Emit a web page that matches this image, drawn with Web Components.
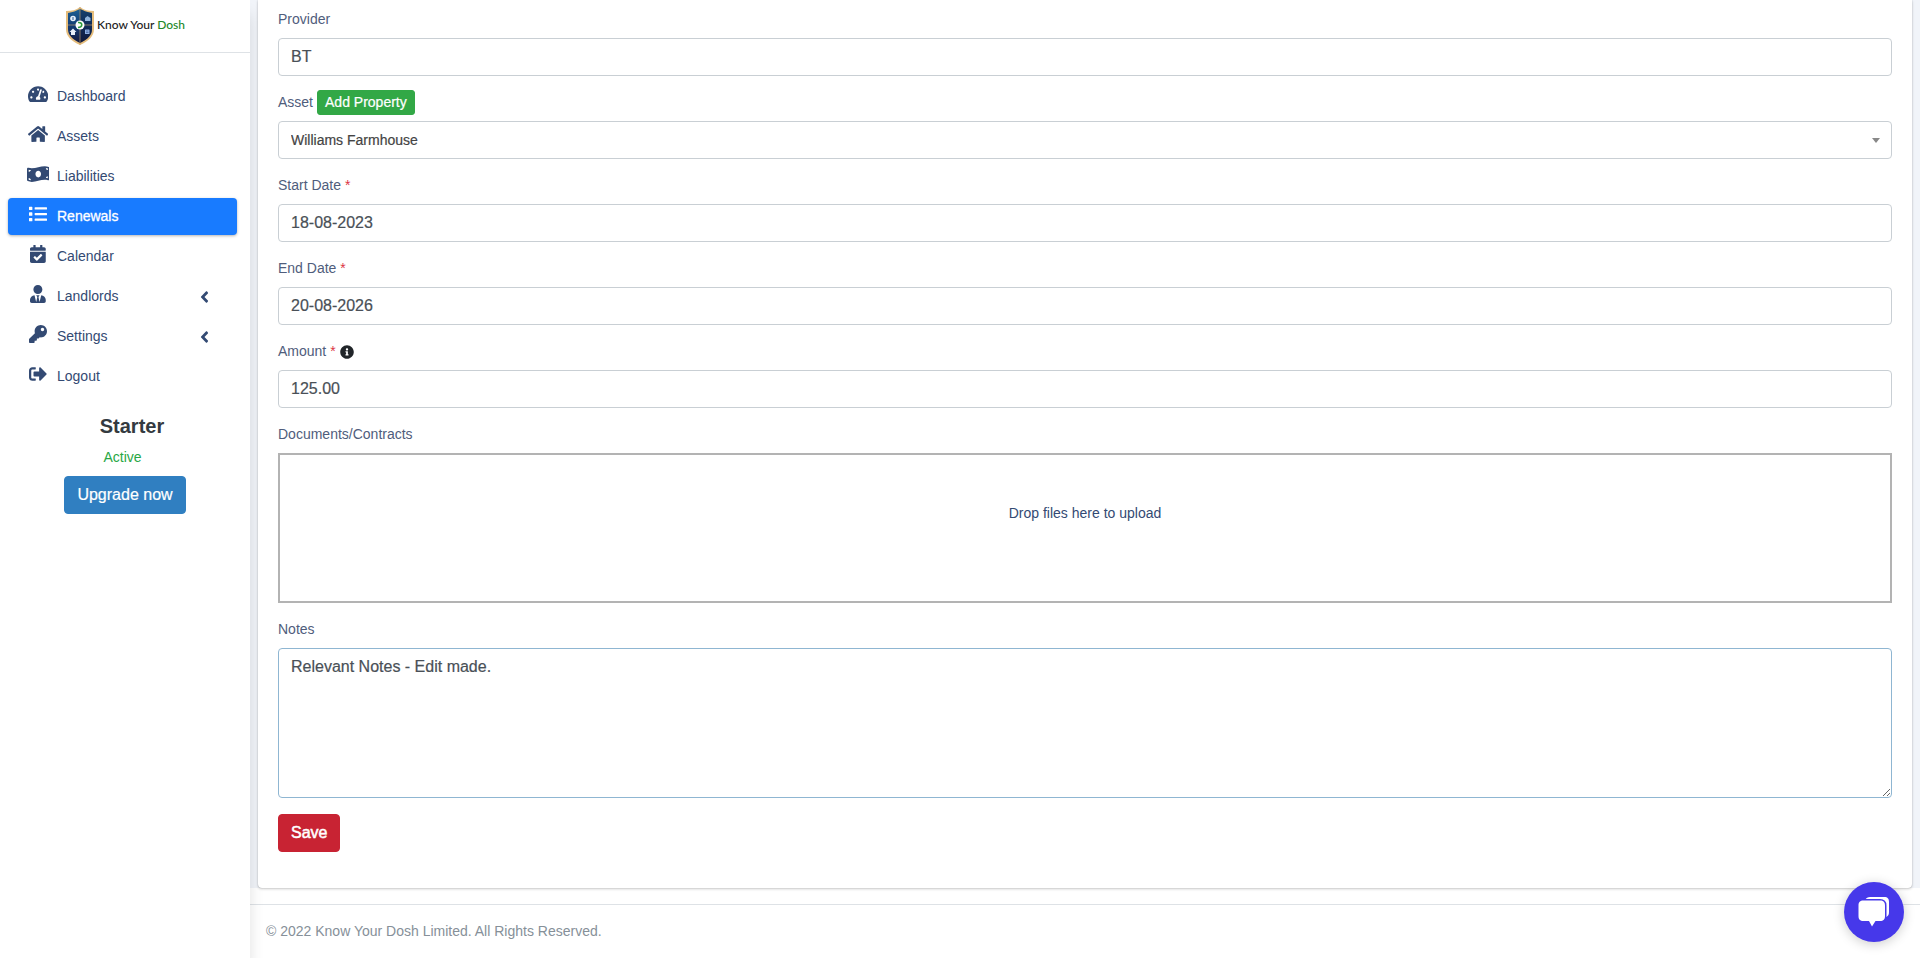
<!DOCTYPE html>
<html lang="en">
<head>
<meta charset="utf-8">
<meta name="viewport" content="width=device-width, initial-scale=1">
<title>Know Your Dosh - Renewals</title>
<style>
  body {
    margin: 0;
    background: #fff;
    color: #212529;
    font: 400 14px/21px "Liberation Sans", Arial, sans-serif;
  }
</style>
</head>
<body>
<app-shell>
  <app-sidebar slot="sidebar">
    <brand-logo slot="brand"></brand-logo>
    <nav-item icon="dashboard">Dashboard</nav-item>
    <nav-item icon="home">Assets</nav-item>
    <nav-item icon="money">Liabilities</nav-item>
    <nav-item icon="list" active>Renewals</nav-item>
    <nav-item icon="calendar">Calendar</nav-item>
    <nav-item icon="user" expandable>Landlords</nav-item>
    <nav-item icon="key" expandable>Settings</nav-item>
    <nav-item icon="logout">Logout</nav-item>
    <plan-status slot="plan" plan="Starter" status="Active"></plan-status>
  </app-sidebar>

  <form-card>
    <form-field label="Provider" value="BT"></form-field>
    <form-field label="Asset" type="select" value="Williams Farmhouse">
      <app-button slot="action" variant="success" size="small">Add Property</app-button>
    </form-field>
    <form-field label="Start Date" value="18-08-2023" required></form-field>
    <form-field label="End Date" value="20-08-2026" required></form-field>
    <form-field label="Amount" value="125.00" required>
      <app-icon slot="action" name="info"></app-icon>
    </form-field>
    <drop-zone label="Documents/Contracts">Drop files here to upload</drop-zone>
    <form-field label="Notes" type="textarea" value="Relevant Notes - Edit made."></form-field>
    <app-button variant="danger">Save</app-button>
  </form-card>

  <span slot="footer">© 2022 Know Your Dosh Limited. All Rights Reserved.</span>
  <chat-launcher slot="chat"></chat-launcher>
</app-shell>

<script>
const ICONS = {
  dashboard: [576, 'M288 32C128.940 32 0 160.940 0 320c0 52.800 14.250 102.260 39.060 144.800 5.610 9.620 16.300 15.200 27.440 15.200h443c11.140 0 21.830-5.580 27.440-15.200C561.750 422.260 576 372.800 576 320c0-159.060-128.940-288-288-288zm0 64c14.710 0 26.580 10.130 30.320 23.650-1.110 2.260-2.640 4.230-3.450 6.670l-9.220 27.670c-5.130 3.490-10.970 6.010-17.640 6.010-17.670 0-32-14.330-32-32S270.330 96 288 96zM96 384c-17.670 0-32-14.330-32-32s14.330-32 32-32 32 14.330 32 32-14.330 32-32 32zm48-160c-17.670 0-32-14.330-32-32s14.330-32 32-32 32 14.330 32 32-14.330 32-32 32zm246.770-72.410l-61.330 184C343.130 347.330 352 364.540 352 384c0 11.720-3.380 22.550-8.880 32H232.880c-5.500-9.450-8.880-20.280-8.880-32 0-33.940 26.500-61.430 59.900-63.590l61.340-184.010c4.170-12.560 17.730-19.450 30.360-15.170 12.570 4.190 19.350 17.790 15.170 30.360zm14.660 57.200l15.520-46.550c3.470-1.290 7.130-2.230 11.050-2.230 17.670 0 32 14.330 32 32s-14.330 32-32 32c-11.380-.010-20.890-6.280-26.570-15.220zM480 384c-17.670 0-32-14.330-32-32s14.330-32 32-32 32 14.330 32 32-14.330 32-32 32z'],
  home: [576, 'M280.370 148.260L96 300.110V464a16 16 0 0 0 16 16l112.060-.290a16 16 0 0 0 15.920-16V368a16 16 0 0 1 16-16h64a16 16 0 0 1 16 16v95.640a16 16 0 0 0 16 16.050L464 480a16 16 0 0 0 16-16V300L295.670 148.260a12.190 12.190 0 0 0-15.300 0zM571.600 251.470L488 182.560V44.050a12 12 0 0 0-12-12h-56a12 12 0 0 0-12 12v72.610L318.470 43a48 48 0 0 0-61 0L4.340 251.470a12 12 0 0 0-1.600 16.900l25.500 31A12 12 0 0 0 45.150 301l235.220-193.740a12.190 12.190 0 0 1 15.300 0L530.900 301a12 12 0 0 0 16.900-1.600l25.500-31a12 12 0 0 0-1.700-16.930z'],
  money: [640, 'M621.160 54.460C582.370 38.190 543.550 32 504.750 32c-123.170-.010-246.330 62.340-369.500 62.340-30.890 0-61.760-3.920-92.650-13.720-3.470-1.100-6.950-1.620-10.350-1.620C15.040 79 0 92.320 0 110.810v317.260c0 12.630 7.230 24.600 18.840 29.460C57.630 473.810 96.450 480 135.250 480c123.170 0 246.340-62.350 369.510-62.350 30.890 0 61.760 3.920 92.650 13.720 3.470 1.100 6.950 1.620 10.350 1.620 17.210 0 32.250-13.320 32.250-31.810V83.930c-.010-12.640-7.240-24.600-18.850-29.470zM48 132.220c20.120 5.040 41.120 7.570 62.720 8.930C104.840 170.540 79 192.690 48 192.690v-60.470zm0 285v-47.780c34.370 0 62.180 27.270 63.710 61.400-22.530-1.810-43.590-6.310-63.710-13.620zM320 352c-44.190 0-80-42.990-80-96 0-53.020 35.820-96 80-96s80 42.980 80 96c0 53.030-35.830 96-80 96zm272 27.780c-17.520-4.390-35.710-6.850-54.320-8.440 5.870-26.080 27.500-45.880 54.320-49.280v57.720zm0-236.110c-30.890-3.910-54.860-29.700-55.810-61.550 19.540 2.170 38.090 6.230 55.810 12.660v48.890z'],
  list: [512, 'M80 368H16a16 16 0 0 0-16 16v64a16 16 0 0 0 16 16h64a16 16 0 0 0 16-16v-64a16 16 0 0 0-16-16zm0-320H16A16 16 0 0 0 0 64v64a16 16 0 0 0 16 16h64a16 16 0 0 0 16-16V64a16 16 0 0 0-16-16zm0 160H16a16 16 0 0 0-16 16v64a16 16 0 0 0 16 16h64a16 16 0 0 0 16-16v-64a16 16 0 0 0-16-16zm416 176H176a16 16 0 0 0-16 16v32a16 16 0 0 0 16 16h320a16 16 0 0 0 16-16v-32a16 16 0 0 0-16-16zm0-320H176a16 16 0 0 0-16 16v32a16 16 0 0 0 16 16h320a16 16 0 0 0 16-16V80a16 16 0 0 0-16-16zm0 160H176a16 16 0 0 0-16 16v32a16 16 0 0 0 16 16h320a16 16 0 0 0 16-16v-32a16 16 0 0 0-16-16z'],
  calendar: [448, 'M436 160H12c-6.627 0-12-5.373-12-12v-36c0-26.510 21.490-48 48-48h48V12c0-6.627 5.373-12 12-12h40c6.627 0 12 5.373 12 12v52h128V12c0-6.627 5.373-12 12-12h40c6.627 0 12 5.373 12 12v52h48c26.510 0 48 21.490 48 48v36c0 6.627-5.373 12-12 12zM12 192h424c6.627 0 12 5.373 12 12v260c0 26.510-21.490 48-48 48H48c-26.510 0-48-21.490-48-48V204c0-6.627 5.373-12 12-12zm333.296 95.947l-28.169-28.398c-4.667-4.705-12.265-4.736-16.970-.068L194.120 364.665l-45.980-46.352c-4.667-4.705-12.266-4.736-16.971-.068l-28.397 28.170c-4.705 4.667-4.736 12.265-.068 16.970l82.601 83.269c4.667 4.705 12.265 4.736 16.970.068l142.953-141.805c4.705-4.667 4.736-12.265.068-16.970z'],
  user: [448, 'M224 256c70.700 0 128-57.300 128-128S294.700 0 224 0 96 57.300 96 128s57.300 128 128 128zm95.800 32.600L272 480l-32-136 32-56h-96l32 56-32 136-47.800-191.400C56.900 292 0 350.300 0 422.400V464c0 26.500 21.500 48 48 48h352c26.500 0 48-21.500 48-48v-41.600c0-72.100-56.900-130.400-128.200-133.800z'],
  key: [512, 'M512 176.001C512 273.203 433.202 352 336 352c-11.220 0-22.190-1.062-32.827-3.069l-24.012 27.014A23.999 23.999 0 0 1 261.223 384H224v40c0 13.255-10.745 24-24 24h-40v40c0 13.255-10.745 24-24 24H24c-13.255 0-24-10.745-24-24v-78.059c0-6.365 2.529-12.470 7.029-16.971l161.802-161.802C163.108 213.814 160 195.271 160 176 160 78.798 238.797.001 335.999 0 433.488-.001 512 78.511 512 176.001zM336 128c0 26.510 21.490 48 48 48s48-21.490 48-48-21.490-48-48-48-48 21.490-48 48z'],
  logout: [512, 'M497 273L329 441c-15 15-41 4.500-41-17v-96H152c-13.300 0-24-10.700-24-24v-96c0-13.300 10.700-24 24-24h136V88c0-21.400 25.900-32 41-17l168 168c9.300 9.400 9.300 24.600 0 34zM192 436v-40c0-6.600-5.400-12-12-12H96c-17.700 0-32-14.300-32-32V160c0-17.700 14.300-32 32-32h84c6.600 0 12-5.400 12-12V76c0-6.600-5.400-12-12-12H96c-53 0-96 43-96 96v192c0 53 43 96 96 96h84c6.600 0 12-5.400 12-12z'],
  angle: [256, 'M31.700 239l136-136c9.400-9.400 24.600-9.400 33.900 0l22.600 22.600c9.400 9.400 9.400 24.600 0 33.900L127.900 256l96.400 96.400c9.400 9.400 9.400 24.600 0 33.900L201.700 409c-9.400 9.400-24.600 9.400-33.900 0l-136-136c-9.500-9.400-9.500-24.600-.1-34z'],
  info: [512, 'M256 8C119.043 8 8 119.083 8 256c0 136.997 111.043 248 248 248s248-111.003 248-248C504 119.083 392.957 8 256 8zm0 110c23.196 0 42 18.804 42 42s-18.804 42-42 42-42-18.804-42-42 18.804-42 42-42zm56 254c0 6.627-5.373 12-12 12h-88c-6.627 0-12-5.373-12-12v-24c0-6.627 5.373-12 12-12h12v-64h-12c-6.627 0-12-5.373-12-12v-24c0-6.627 5.373-12 12-12h64c6.627 0 12 5.373 12 12v100h12c6.627 0 12 5.373 12 12v24z'],
};

class BaseElement extends HTMLElement {
  constructor() {
    super();
    this.attachShadow({ mode: 'open' });
  }

  connectedCallback() {
    const template = document.createElement('template');
    template.innerHTML = this.template();
    this.shadowRoot.replaceChildren(template.content.cloneNode(true));
  }
}

class AppIcon extends BaseElement {
  template() {
    const [width, path] = ICONS[this.getAttribute('name')];
    return `
    <style>
      :host { display: inline-flex; height: 14px; }
      svg { display: block; height: 100%; fill: currentColor; }
    </style>
    <svg viewBox="0 0 ${width} 512" aria-hidden="true"><path d="${path}"/></svg>
    `;
  }
}

class AppShell extends BaseElement {
  template() {
    return `
    <style>
      :host {
        display: grid;
        grid-template-columns: 250px minmax(0, 1fr);
        min-height: 100vh;
      }
      .page { display: flex; flex-direction: column; }
      main { padding: 0 8px; background: #f1f4f9; }
      footer {
        margin-top: 16px;
        padding: 16px;
        border-top: 1px solid #dee2e6;
        color: #869099;
      }
    </style>
    <slot name="sidebar"></slot>
    <div class="page">
      <main><slot></slot></main>
      <footer><slot name="footer"></slot></footer>
    </div>
    <slot name="chat"></slot>
    `;
  }
}

class AppSidebar extends BaseElement {
  template() {
    return `
    <style>
      :host {
        display: block;
        position: relative;
        z-index: 1;
        background: #fff;
        box-shadow: 0 14px 14px rgba(0, 0, 0, .12);
      }
      header {
        display: flex;
        justify-content: center;
        padding: 6px 0;
        border-bottom: 1px solid #dee2e6;
      }
      nav {
        display: flex;
        flex-direction: column;
        gap: 3px;
        padding: 25px 13px 0 8px;
      }
    </style>
    <header><slot name="brand"></slot></header>
    <nav><slot></slot></nav>
    <slot name="plan"></slot>
    `;
  }
}

class BrandLogo extends BaseElement {
  template() {
    return `
    <style>
      :host { display: block; }
      a {
        display: flex;
        align-items: center;
        gap: 2px;
        color: #222;
        font: 500 12px/18px Lato, sans-serif;
        text-decoration: none;
      }
      svg { width: 30px; height: 40px; }
      span { padding-bottom: 2px; }
      b { color: #23882a; font-weight: inherit; }
    </style>
    <a href="#">
      <svg viewBox="0 0 30 40" aria-hidden="true">
        <defs>
          <linearGradient id="steel" x1="0" y1="0" x2="0" y2="1">
            <stop offset="0" stop-color="#1d6093"/>
            <stop offset=".5" stop-color="#143c74"/>
            <stop offset="1" stop-color="#141b40"/>
          </linearGradient>
        </defs>
        <path d="M15 1c4 3 8 4 14 4v18c0 7-5 12-14 16C6 35 1 30 1 23V5c6 0 10-1 14-4z" fill="#e5bd7c"/>
        <path d="M15 3c4 2 7 3 12 4v16c0 6-4 10-12 14C7 33 3 29 3 23V7c5-1 8-2 12-4z" fill="url(#steel)"/>
        <path d="M15 3c4 2 7 3 12 4v16c0 6-4 10-12 14z" fill="#0b1433" opacity=".4"/>
        <path d="M15 1v38M3 19h24" stroke="#b99a6a" stroke-width=".7"/>
        <circle cx="15" cy="19" r="4.500" fill="#fff"/>
        <path d="M13 16.500c5-.5 5 4.500 0 5" fill="none" stroke="#2c9c3c" stroke-width="1.600"/>
        <circle cx="8" cy="12.500" r="2.800" fill="#e8f0fa"/>
        <path d="M8 11v3" stroke="#28588f"/>
        <path d="M20 15v-3l2.500-2 3 2v3z" fill="#8fb4dc"/>
        <path d="M4.500 26L8 22.500 11.500 26H10v3H6v-3z" fill="#e8f0fa"/>
        <rect x="20" y="23.500" width="4.500" height="4.500" rx=".5" fill="#8fb0e2"/>
        <path d="M21 25h2.500M21 26.500h2.500" stroke="#2c4c8c" stroke-width=".6"/>
      </svg>
      <span>Know Your <b>Dosh</b></span>
    </a>
    `;
  }
}

class NavItem extends BaseElement {
  template() {
    const active = this.hasAttribute('active');
    return `
    <style>
      :host { display: block; }
      a {
        display: flex;
        align-items: center;
        gap: 6px;
        padding: 8px 28px 8px 17px;
        border-radius: 4px;
        color: #334a73;
        text-decoration: none;
      }
      a[aria-current] {
        background: #187bff;
        box-shadow: 0 1px 3px rgba(0, 0, 0, .3);
        color: #fff;
        -webkit-text-stroke: .3px;
      }
      .icon { height: 18px; width: 26px; justify-content: center; margin: -1px 0 4px; }
      .angle { height: 18px; margin: 2px 0 1px auto; }
    </style>
    <a href="#"${active ? ' aria-current="page"' : ''}>
      <app-icon class="icon" name="${this.getAttribute('icon')}"></app-icon>
      <slot></slot>
      ${this.hasAttribute('expandable') ? '<app-icon class="angle" name="angle"></app-icon>' : ''}
    </a>
    `;
  }
}

class PlanStatus extends BaseElement {
  template() {
    return `
    <style>
      :host {
        display: flex;
        flex-direction: column;
        align-items: center;
        padding-top: 19px;
      }
      h2 { margin: 0; padding-left: 14px; color: #343a40; font: 700 20px/24px "Liberation Sans", Arial, sans-serif; }
      p { margin: 9px 0 8px; padding-right: 5px; color: #28a745; }
    </style>
    <h2>${this.getAttribute('plan')}</h2>
    <p>${this.getAttribute('status')}</p>
    <app-button variant="info">Upgrade now</app-button>
    `;
  }
}

class AppButton extends BaseElement {
  template() {
    return `
    <style>
      :host { display: inline-block; --fill: #c82333; }
      :host([variant='success']) { --fill: #32a846; }
      :host([variant='info']) { --fill: #307fc1; }
      button {
        display: block;
        padding: 6px 12px;
        border: 1px solid var(--fill);
        border-radius: 4px;
        background: var(--fill);
        color: #fff;
        font: 400 16px/24px "Liberation Sans", Arial, sans-serif;
        -webkit-text-stroke: .2px;
        cursor: pointer;
      }
      :host([variant='danger']) button { -webkit-text-stroke: .5px; }
      :host([size='small']) button {
        padding: 1px 7px;
        border-radius: 3px;
        font-size: 14px;
        line-height: 21px;
      }
    </style>
    <button type="button"><slot></slot></button>
    `;
  }
}

class FormCard extends BaseElement {
  template() {
    return `
    <style>
      :host {
        display: block;
        position: relative;
        z-index: 2;
        padding: 9px 20px 36px;
        border-radius: 0 0 4px 4px;
        background: #fff;
        box-shadow: 0 0 1px rgba(0, 0, 0, .3), 0 1px 3px rgba(0, 0, 0, .2);
      }
      form { display: flex; flex-direction: column; align-items: stretch; gap: 16px; }
      ::slotted(app-button) { align-self: flex-start; }
    </style>
    <form><slot></slot></form>
    `;
  }
}

class FormField extends BaseElement {
  template() {
    const required = this.hasAttribute('required');
    return `
    <style>
      :host { display: block; }
      .head {
        display: flex;
        align-items: center;
        gap: 4px;
        height: 21px;
        margin-bottom: 8px;
      }
      label { color: #4f5d7c; }
      i { color: #dc3545; font-style: normal; }
      .control { display: grid; align-items: center; }
      .control > * { grid-area: 1 / 1; }
      input, select, textarea {
        box-sizing: border-box;
        width: 100%;
        min-width: 0;
        height: 38px;
        margin: 0;
        padding: 6px 12px;
        border: 1px solid #c9cfd4;
        border-radius: 4px;
        background: #fff;
        color: #495057;
        font: 400 16px/24px "Liberation Sans", Arial, sans-serif;
        -webkit-text-stroke: .2px;
        outline: 0;
      }
      select { appearance: none; color: #444; font-size: 14px; }
      textarea { display: block; height: 150px; border-color: #8fb6d2; resize: vertical; }
      .caret {
        justify-self: end;
        margin-right: 12px;
        border: 4px solid transparent;
        border-top: 5px solid #888;
        border-bottom: 0;
        pointer-events: none;
      }
    </style>
    <div class="head">
      <label for="control">${this.getAttribute('label')}${required ? ' <i>*</i>' : ''}</label>
      <slot name="action"></slot>
    </div>
    <div class="control">${this.control(this.getAttribute('value'))}</div>
    `;
  }

  control(value) {
    switch (this.getAttribute('type')) {
      case 'select':
        return `<select id="control"><option>${value}</option></select><span class="caret"></span>`;
      case 'textarea':
        return `<textarea id="control">${value}</textarea>`;
      default:
        return `<input id="control" type="text" value="${value}">`;
    }
  }
}

class DropZone extends BaseElement {
  template() {
    return `
    <style>
      :host { display: block; }
      label { display: block; cursor: pointer; }
      .title { margin-bottom: 8px; color: #4f5d7c; }
      .zone {
        box-sizing: border-box;
        min-height: 150px;
        padding: 48px 20px;
        border: 2px solid #b3b3b3;
        color: #334a73;
        text-align: center;
      }
    </style>
    <label class="title" for="files">${this.getAttribute('label')}</label>
    <label class="zone" for="files"><slot></slot></label>
    <input id="files" type="file" multiple hidden>
    `;
  }
}

class ChatLauncher extends BaseElement {
  template() {
    return `
    <style>
      :host { position: fixed; right: 16px; bottom: 16px; z-index: 3; }
      button {
        display: grid;
        place-items: center;
        width: 60px;
        height: 60px;
        padding: 0;
        border: 0;
        border-radius: 50%;
        background: #4638ea;
        box-shadow: 0 2px 12px rgba(0, 0, 0, .2);
        cursor: pointer;
      }
      svg { width: 32px; height: 32px; }
    </style>
    <button type="button" aria-label="Open chat">
      <svg viewBox="0 0 32 32" aria-hidden="true">
        <path d="M7 4c1-2 3-3 5-3h14c4 0 5 2 5 5v10c0 3-1 4-3 5L20 12z" fill="#fff"/>
        <path d="M5.500 4.500H22c3.500 0 5 1.500 5 5V20c0 3.500-1.500 5-5 5h-4.500L14 30.500 11 25H5.500c-3.500 0-5-1.500-5-5V9.500c0-3.500 1.500-5 5-5z" fill="#fff" stroke="#4638ea" stroke-width="3" paint-order="stroke"/>
      </svg>
    </button>
    `;
  }
}

customElements.define('app-icon', AppIcon);
customElements.define('app-shell', AppShell);
customElements.define('app-sidebar', AppSidebar);
customElements.define('brand-logo', BrandLogo);
customElements.define('nav-item', NavItem);
customElements.define('plan-status', PlanStatus);
customElements.define('app-button', AppButton);
customElements.define('form-card', FormCard);
customElements.define('form-field', FormField);
customElements.define('drop-zone', DropZone);
customElements.define('chat-launcher', ChatLauncher);
</script>
</body>
</html>
